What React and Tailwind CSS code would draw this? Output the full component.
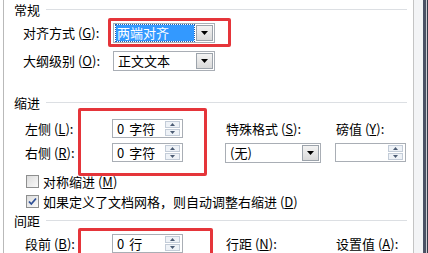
import React from 'react';

const font = { fontFamily: '"Noto Sans CJK SC", "Noto Sans", sans-serif' };

// 带下划线助记符的标签
function Label({ text, k, className = '' }) {
  return (
    <span className={`text-[13px] leading-none text-black whitespace-nowrap ${className}`}>
      {text} (<u>{k}</u>):
    </span>
  );
}

function Arrow() {
  return (
    <svg width="7" height="4" viewBox="0 0 7 4">
      <path d="M0 0h7L3.5 4z" fill="#000" />
    </svg>
  );
}

function Select({ value, selected = false, width }) {
  return (
    <div
      className={`h-[20px] ${width} flex items-stretch bg-white border border-[#a9aeb5] p-[1px]`}
    >
      <div className="flex-1 flex items-center pl-[1px] pr-[2px]">
        {selected ? (
          <span className="h-full flex-1 flex items-center bg-[#3399ff] text-white text-[13px] leading-none pl-[1px] outline-1 outline-dotted outline-[#1a5fb4]">
            {value}
          </span>
        ) : (
          <span className="text-[13px] leading-none text-black pl-[2px]">{value}</span>
        )}
      </div>
      <div className="w-[17px] flex items-center justify-center border border-[#9ca3ab] bg-gradient-to-b from-[#f3f3f3] to-[#dadada]">
        <Arrow />
      </div>
    </div>
  );
}

function Spin({ num, unit, width = 'w-[71px]' }) {
  return (
    <div className={`h-[19px] ${width} flex items-stretch bg-white border border-[#a9aeb5] p-[1px]`}>
      <div className="flex-1 flex items-center pl-[3px] text-[13px] leading-none text-black">
        {num}
        {unit && <span className="ml-[5px]">{unit}</span>}
      </div>
      <div className="w-[15px] flex flex-col gap-[1px] mr-[1px]">
        <div className="flex-1 flex items-center justify-center border border-[#c3ccd8] bg-[#eef2f7]">
          <svg width="5" height="3" viewBox="0 0 5 3">
            <path d="M0 3h5L2.5 0z" fill="#4c5c74" />
          </svg>
        </div>
        <div className="flex-1 flex items-center justify-center border border-[#c3ccd8] bg-[#eef2f7]">
          <svg width="5" height="3" viewBox="0 0 5 3">
            <path d="M0 0h5L2.5 3z" fill="#4c5c74" />
          </svg>
        </div>
      </div>
    </div>
  );
}

function Header({ text, className = '' }) {
  return (
    <div className={`flex items-center pl-[10px] pr-[6px] ${className}`}>
      <span className="text-[13px] leading-none text-black">{text}</span>
      <div className="flex-1 h-px bg-[#dcdfe3] ml-[6px]" />
    </div>
  );
}

function Check({ checked, children }) {
  return (
    <div className="flex items-center pl-[22px]">
      <div className="w-[13px] h-[13px] border border-[#8e8f8f] bg-gradient-to-br from-[#dcdcdc] to-[#fafafa] flex items-center justify-center">
        {checked && (
          <svg width="9" height="9" viewBox="0 0 9 9">
            <path d="M1 4.5l2.3 2.5L8 1.5" fill="none" stroke="#2d4f96" strokeWidth="1.8" />
          </svg>
        )}
      </div>
      <span className="ml-[4px] text-[13px] leading-none text-black whitespace-nowrap">{children}</span>
    </div>
  );
}

export default function App() {
  return (
    <div className="w-[428px] h-[253px] bg-white relative overflow-hidden flex" style={font}>
      {/* 主面板 */}
      <div className="w-[413px] pl-[3px] shrink-0">
        <div className="h-full border-l border-[#b9b9b9] flex flex-col">
          {/* 常规 */}
          <Header text="常规" className="h-[19px]" />
          <div className="flex items-center h-[20px] mt-[4px] pl-[19px]">
            <Label text="对齐方式" k="G" className="w-[90px]" />
            <Select value="两端对齐" selected width="w-[102px]" />
          </div>
          <div className="flex items-center h-[20px] mt-[8px] pl-[19px]">
            <Label text="大纲级别" k="O" className="w-[90px]" />
            <Select value="正文文本" width="w-[102px]" />
          </div>

          {/* 缩进 */}
          <Header text="缩进" className="h-[20px] mt-[22px]" />
          <div className="flex items-center h-[19px] mt-[7px] pl-[21px]">
            <Label text="左侧" k="L" className="w-[87px]" />
            <Spin num="0" unit="字符" />
            <div className="w-[43px]" />
            <Label text="特殊格式" k="S" className="w-[110px]" />
            <Label text="磅值" k="Y" />
          </div>
          <div className="flex items-center h-[19px] mt-[5px] pl-[21px]">
            <Label text="右侧" k="R" className="w-[87px]" />
            <Spin num="0" unit="字符" />
            <div className="w-[42px]" />
            <div className="w-[110px]">
              <Select value="(无)" width="w-[96px]" />
            </div>
            <Spin num="" />
          </div>
          <div className="h-[16px] mt-[12px] flex items-center">
            <Check>
              对称缩进 (<u>M</u>)
            </Check>
          </div>
          <div className="h-[16px] mt-[4px] flex items-center">
            <Check checked>
              如果定义了文档网格，则自动调整右缩进 (<u>D</u>)
            </Check>
          </div>

          {/* 间距 */}
          <Header text="间距" className="h-[18px] mt-[2px]" />
          <div className="flex items-center h-[19px] mt-[5px] pl-[21px]">
            <Label text="段前" k="B" className="w-[87px]" />
            <Spin num="0" unit="行" />
            <div className="w-[43px]" />
            <Label text="行距" k="N" className="w-[110px]" />
            <Label text="设置值" k="A" />
          </div>
        </div>
      </div>

      {/* 右侧窗口边框 */}
      <div className="flex-1 flex">
        <div className="w-px bg-[#c4c4c4]" />
        <div className="w-[9px] bg-[#f3f4f6]" />
        <div className="w-[3px] bg-[#4b5265]" />
        <div className="w-px bg-[#c9ccd2]" />
        <div className="w-px bg-[#353a48]" />
      </div>

      {/* 红色标注框 */}
      <div className="absolute left-[108px] top-[18px] w-[123px] h-[29px] border-[3px] border-[#e5353a] rounded-[2px]" />
      <div className="absolute left-[78px] top-[108px] w-[129px] h-[68px] border-[3px] border-[#e5353a] rounded-[2px]" />
      <div className="absolute left-[78px] top-[228px] w-[135px] h-[40px] border-[3px] border-[#e5353a] rounded-[2px]" />
    </div>
  );
}
